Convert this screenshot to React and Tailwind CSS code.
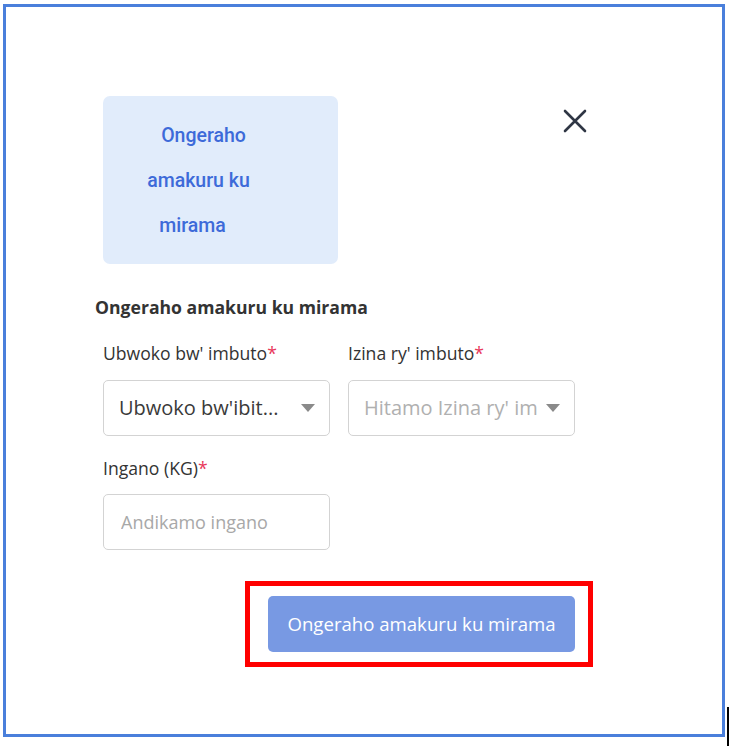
import React from 'react';

const Required = () => <span className="text-[#e8385a]">*</span>;

const Caret = () => (
  <svg width="14" height="8" viewBox="0 0 14 8" className="shrink-0">
    <path d="M0 0h14L7 8z" fill="#8a8a8a" />
  </svg>
);

const SelectBox = ({ value, placeholder }) => (
  <div className="flex h-[56px] w-[227px] items-center gap-2 overflow-hidden rounded-[5px] border border-[#d3d3d3] bg-white pl-[15px] pr-[14px]">
    <span className={`min-w-0 flex-1 overflow-hidden whitespace-nowrap text-[20px] ${value ? 'text-[#3a3a3a]' : 'text-[#b0b0b0]'}`}>
      {value || placeholder}
    </span>
    <Caret />
  </div>
);

export default function App() {
  return (
    <div className="relative h-[746px] w-[730px] bg-white font-['Open_Sans',sans-serif]">
      <div className="absolute left-[3px] top-[4px] h-[733px] w-[722px] border-[3px] border-[#4a7fdb]" />
      <div className="absolute left-[727px] top-[707px] h-[39px] w-[2px] bg-black" />

      <div className="relative flex flex-col pl-[95px] pt-[96px]">
        <div className="flex items-start">
          <div className="ml-[8px] flex h-[168px] w-[235px] flex-col items-center justify-center rounded-[7px] bg-[#e1ecfb] pr-[44px] text-center font-['Roboto',sans-serif] text-[19.5px] font-medium leading-[45px] text-[#3d6ad9]">
            <span className="pl-[10px]">Ongeraho</span>
            <span>amakuru ku</span>
            <span className="pr-[12px]">mirama</span>
          </div>
          <button className="ml-[224px] mt-[12px] text-[#2f3644]">
            <svg width="26" height="26" viewBox="0 0 26 26">
              <path d="M3 3l20 20M23 3L3 23" stroke="currentColor" strokeWidth="2.6" strokeLinecap="round" />
            </svg>
          </button>
        </div>

        <h2 className="mt-[31px] text-[17.6px] leading-[24px] font-bold text-[#333]">Ongeraho amakuru ku mirama</h2>

        <div className="ml-[8px] mt-[22px] flex gap-[18px]">
          <div className="flex flex-col">
            <label className="text-[17.6px] leading-[24px] text-[#333]">Ubwoko bw' imbuto<Required /></label>
            <div className="mt-[15px]">
              <SelectBox value="Ubwoko bw'ibit..." />
            </div>
          </div>
          <div className="flex flex-col">
            <label className="text-[17.6px] leading-[24px] text-[#333]">Izina ry' imbuto<Required /></label>
            <div className="mt-[15px]">
              <SelectBox placeholder="Hitamo Izina ry' imbuto" />
            </div>
          </div>
        </div>

        <div className="ml-[8px] mt-[20px] flex flex-col">
          <label className="text-[17.6px] leading-[24px] text-[#333]">Ingano (KG)<Required /></label>
          <input
            placeholder="Andikamo ingano"
            className="mt-[14px] h-[56px] w-[227px] rounded-[5px] border border-[#d3d3d3] px-[17px] text-[18px] text-[#333] outline-none placeholder:text-[#a8a8a8]"
          />
        </div>

        <div className="ml-[150px] mt-[31px] w-[348px] border-[5px] border-[#ff0000] px-[18px] py-[10px]">
          <button className="flex h-[56px] w-[307px] items-center justify-center rounded-[5px] bg-[#7899e3] text-[18.6px] text-white">
            Ongeraho amakuru ku mirama
          </button>
        </div>
      </div>
    </div>
  );
}
